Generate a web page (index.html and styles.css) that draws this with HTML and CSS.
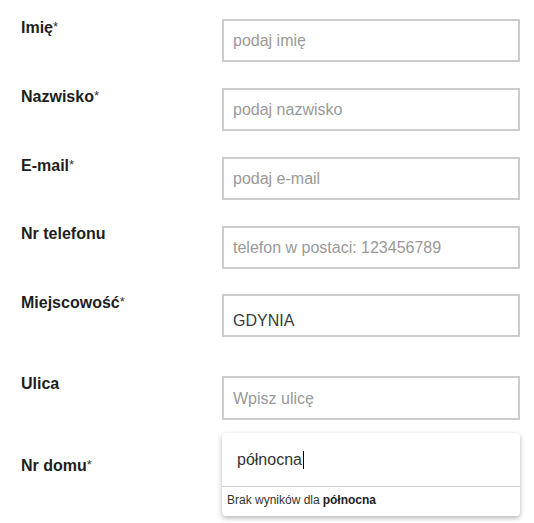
FILE: index.html
```html
<!DOCTYPE html>
<html lang="pl">
<head>
<meta charset="utf-8">
<title>Formularz</title>
<link rel="stylesheet" href="styles.css">
</head>
<body>
<form class="form">
  <div class="row r-std">
    <label class="label">Imię<span class="req">*</span></label>
    <input class="field" type="text" placeholder="podaj imię">
  </div>
  <div class="row r-std">
    <label class="label">Nazwisko<span class="req">*</span></label>
    <input class="field" type="text" placeholder="podaj nazwisko">
  </div>
  <div class="row r-std">
    <label class="label">E-mail<span class="req">*</span></label>
    <input class="field" type="text" placeholder="podaj e-mail">
  </div>
  <div class="row r-tel">
    <label class="label">Nr telefonu</label>
    <input class="field" type="text" placeholder="telefon w postaci: 123456789">
  </div>
  <div class="row r-city">
    <label class="label">Miejscowość<span class="req">*</span></label>
    <div class="field select city">GDYNIA</div>
  </div>
  <div class="row r-street">
    <label class="label">Ulica</label>
    <div class="select-wrap">
      <div class="field select street"><span class="ph">Wpisz ulicę</span></div>
      <div class="dropdown">
        <div class="search"><span class="typed">północna</span><span class="caret"></span></div>
        <div class="results">Brak wyników dla <b>północna</b></div>
      </div>
    </div>
  </div>
  <div class="row r-house">
    <label class="label">Nr domu<span class="req">*</span></label>
    <div class="field select house"></div>
  </div>
</form>
</body>
</html>
```

FILE: styles.css
```css
* { box-sizing: border-box; }
html, body { margin: 0; padding: 0; background: #fff; }
body { font-family: "Liberation Sans", Arial, sans-serif; color: #222; min-height: 523px; }

.form { padding: 19px 0 40px 21px; }

.row { display: flex; align-items: flex-start; }
.r-std { margin-bottom: 26px; }
.r-tel { margin-bottom: 25px; }
.r-city { margin-bottom: 39px; }
.r-street { margin-bottom: 37px; }

.label {
  width: 201px;
  font-size: 16px;
  font-weight: bold;
  line-height: 18px;
  margin-top: -1px;
  color: #1e1e1e;
}
.req { font-weight: normal; font-size: 13px; vertical-align: 2px; color: #333; }

.field {
  width: 298px;
  height: 43px;
  border: 2px solid #cccccc;
  padding: 0 9px;
  font-family: "Liberation Sans", Arial, sans-serif;
  font-size: 16px;
  color: #444;
  background: #fff;
  outline: none;
  border-radius: 0;
  margin: 0;
}
.field::placeholder { color: #999; opacity: 1; }

.select { line-height: 18px; }
.city { padding-top: 16px; color: #3a3a3a; }
.street { height: 44px; padding-top: 12px; }
.ph { color: #999; }

.select-wrap { position: relative; width: 298px; }

.dropdown {
  position: absolute;
  left: 0;
  top: 57px;
  width: 298px;
  height: 83px;
  background: #fff;
  border-radius: 4px;
  box-shadow: 0 2px 5px rgba(0, 0, 0, 0.3);
  z-index: 2;
  display: flex;
  flex-direction: column;
}
.search {
  height: 54px;
  flex: none;
  padding: 0 0 0 15px;
  display: flex;
  align-items: center;
  font-size: 16px;
  color: #333;
  border-bottom: 1px solid #cfcfcf;
}
.caret {
  display: inline-block;
  width: 1px;
  height: 18px;
  background: #000;
  margin-left: 1px;
}
.results {
  height: 28px;
  flex: none;
  display: flex;
  align-items: center;
  padding: 0 0 2px 5px;
  font-size: 12px;
  color: #333;
}
.results b { color: #222; margin-left: 3px; }
```
